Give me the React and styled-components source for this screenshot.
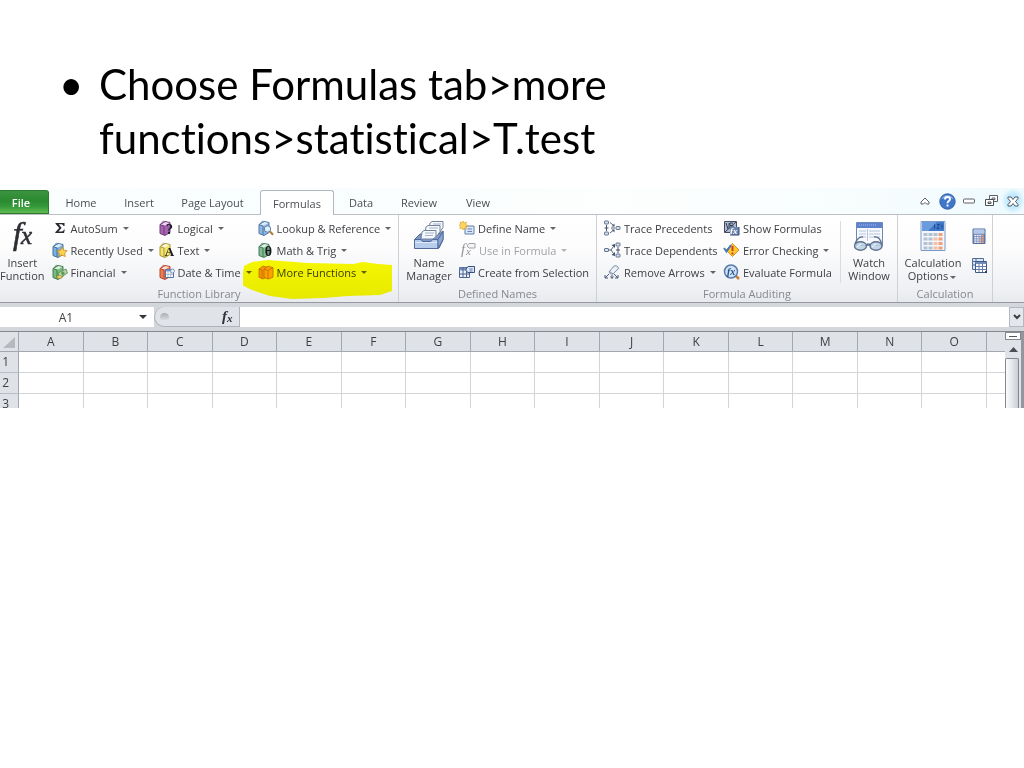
import React from "react";
import styled, { createGlobalStyle } from "styled-components";

const Global = createGlobalStyle`
  *, *::before, *::after { box-sizing: border-box; }
  body { margin: 0; background: #fff; }
  button, input { font: inherit; color: inherit; }
`;

const Slide = styled.main`
  min-height: 100vh;
  background: #fff;
  font-family: "Open Sans", "Noto Sans", sans-serif;
  font-size: 11px;
  color: #3f4044;
`;

const Bullets = styled.ul`
  margin: 0;
  padding: 57px 60px 23px 99px;
  list-style: none;
  font-family: Lato, "Open Sans", sans-serif;
  font-size: 42px;
  font-variant-ligatures: none;
  line-height: 54px;
  color: #000;
`;

const Bullet = styled.li`
  max-width: 640px;
  &::before {
    content: "•";
    float: left;
    margin-left: -40px;
  }
`;

const Excel = styled.section`
  overflow: hidden;
`;

const TabBar = styled.nav`
  display: flex;
  align-items: flex-end;
  height: 27px;
  border-bottom: 1px solid #bcc0c6;
  background: linear-gradient(90deg, #fbfefe, #f8fdfd 30%, #fdfefe 60%, #f7fdfd 85%, #eefaff);
`;

const Tab = styled.button`
  width: ${(p) => p.$w}px;
  height: 24px;
  padding: 0;
  border: 0;
  background: none;
  line-height: 23px;
  text-align: center;
  color: #4c4e52;
`;

const FileTab = styled(Tab)`
  padding-right: 6px;
  border: 1px solid #2b7a2f;
  border-left: 0;
  border-radius: 0 3px 0 0;
  background: linear-gradient(#3c9440, #2b8a30 45%, #35993a 70%, #5fbd50);
  color: #fff;
  font-weight: 600;
`;

const ActiveTab = styled(Tab)`
  height: 25px;
  margin-bottom: -1px;
  border: 1px solid #b4b8be;
  border-bottom: 0;
  border-radius: 3px 3px 0 0;
  background: #fff;
`;

const WindowTools = styled.div`
  display: flex;
  align-items: center;
  height: 26px;
  margin-left: auto;
`;

const ToolButton = styled.button`
  display: grid;
  place-items: center;
  width: 22px;
  height: 24px;
  padding: 0;
  border: 0;
  background: ${(p) => (p.$glow ? "radial-gradient(#9fdcfa, #c9edfd 45%, transparent 75%)" : "none")};
`;

const Ribbon = styled.div`
  display: flex;
  height: 88px;
  border-bottom: 1px solid #96999f;
  background: linear-gradient(#fff, #fcfcfd 40%, #eef0f3 85%, #e8eaee);
`;

const Group = styled.section`
  display: flex;
  flex: 0 0 ${(p) => p.$w}px;
  flex-direction: column;
  padding-top: 2px;
  border-right: 1px solid #cdd0d5;
`;

const GroupBody = styled.div`
  display: flex;
  height: 69px;
`;

const GroupLabel = styled.h2`
  margin: 0;
  text-align: center;
  font-size: 11px;
  font-weight: 400;
  line-height: 15px;
  color: #85888e;
`;

const Column = styled.div`
  position: relative;
  display: flex;
  flex: 0 0 ${(p) => p.$w}px;
  flex-direction: column;
`;

const Inset = styled.div`
  padding-left: 7px;
`;

const Item = styled.button`
  display: flex;
  align-items: center;
  gap: 3px;
  height: 22px;
  padding: 0;
  border: 0;
  background: none;
  white-space: nowrap;
  color: ${(p) => (p.disabled ? "#a0a2a6" : "inherit")};
  svg { flex: none; }
`;

const BigItem = styled.button`
  display: flex;
  flex: 0 0 ${(p) => p.$w}px;
  flex-direction: column;
  align-items: center;
  padding: 3px 0 0;
  border: 0;
  background: none;
  line-height: 13px;
  white-space: nowrap;
  svg { flex: none; }
`;

const BigText = styled.span`
  display: flex;
  flex-direction: column;
  align-items: center;
  margin-top: 3px;
`;

const Caret = styled.span`
  display: inline-block;
  flex: none;
  margin: 0 2px;
  border: 3px solid transparent;
  border-top-color: currentColor;
  border-bottom: 0;
  vertical-align: middle;
  opacity: 0.8;
`;

const Divider = styled.div`
  flex: 0 0 1px;
  height: 62px;
  margin-top: 4px;
  background: #d9dbe0;
`;

const Marker = styled.svg`
  position: absolute;
  left: -15px;
  top: 43px;
  mix-blend-mode: multiply;
  pointer-events: none;
`;

const CalcColumn = styled.div`
  display: flex;
  flex: 0 0 22px;
  flex-direction: column;
  align-items: center;
  gap: 10px;
  padding-top: 10px;
`;

const FormulaBar = styled.div`
  display: flex;
  height: 29px;
  padding: 4px 0;
  border-bottom: 1px solid #85888d;
  background: #d3d6db;
`;

const NameBox = styled.div`
  display: flex;
  align-items: center;
  width: 154px;
  background: #fff;
`;

const CellInput = styled.input`
  flex: 1;
  min-width: 0;
  padding: 0;
  border: 0;
  outline: 0;
  background: none;
  text-align: center;
  font-size: 12px;
`;

const PlainButton = styled.button`
  display: grid;
  place-items: center;
  width: 22px;
  height: 19px;
  padding: 0;
  border: 0;
  background: none;
`;

const FxArea = styled.div`
  display: flex;
  align-items: center;
  justify-content: space-between;
  width: 86px;
  padding-left: 5px;
  border: 1px solid #b0b4ba;
  border-top: 0;
  border-radius: 12px 0 0 12px;
  background: #e0e4e9;
`;

const Knob = styled.span`
  width: 9px;
  height: 7px;
  border-radius: 5px 5px 3px 3px;
  background: linear-gradient(#a9adb2, #d9dce0);
`;

const FormulaInput = styled.input`
  flex: 1;
  min-width: 0;
  padding: 0 4px;
  border: 0;
  outline: 0;
  background: #fff;
`;

const Expand = styled(PlainButton)`
  width: 15px;
  height: 20px;
  border: 1px solid #b5b9bf;
  background: #e4e7eb;
`;

const Sheet = styled.div`
  display: flex;
  height: 76px;
  overflow: hidden;
`;

const Cells = styled.table`
  flex: 1;
  width: 0;
  height: 83px;
  border-collapse: separate;
  border-spacing: 0;
  table-layout: fixed;
  font-size: 12px;
  th {
    height: 21px;
    padding: 0;
    border-right: 1px solid #a3a8af;
    border-bottom: 1px solid #a3a8af;
    background: #dfe3e8;
    font-weight: 400;
    line-height: 20px;
  }
  th[scope="col"] { height: 20px; line-height: 19px; }
  th[scope="row"] { padding-right: 9px; border-bottom-color: #b9bdc3; text-align: right; }
  td { padding: 0; border-right: 1px solid #d2d4d8; border-bottom: 1px solid #d2d4d8; }
  td:last-child, th:last-child { border-right: 0; }
`;

const Corner = styled.td`
  && { border-color: #a3a8af; background: #dfe3e8; vertical-align: bottom; }
  svg { display: block; margin-left: 3px; margin-bottom: 3px; }
`;

const LastHead = styled.td`
  && { border-color: #a3a8af; background: #dfe3e8; }
`;

const ScrollBar = styled.div`
  display: flex;
  flex: 0 0 19px;
  flex-direction: column;
  border-right: 3px solid #93979d;
  background: #dfe3e8;
`;

const SplitHandle = styled.button`
  height: 8px;
  padding: 0 3px;
  border: 1px solid #85898f;
  background: #fff;
  &::before { content: ""; display: block; height: 1px; background: #55585d; }
`;

const ScrollUp = styled(PlainButton)`
  width: 16px;
  height: 18px;
`;

const Thumb = styled.div`
  flex: 1;
  width: 14px;
  border: 1px solid #85898f;
  border-bottom: 0;
  border-radius: 2px 2px 0 0;
  background: linear-gradient(90deg, #fbfbfc, #dfe3e8 60%, #c8cdd4);
`;

function Book({ fill, edge, children }) {
  return (
    <svg width="16" height="16" viewBox="0 0 16 16">
      <path d="M1 4.5 6 1.5l5 1v10l-5 3-5-2z" fill={fill} stroke={edge} />
      <path d="M1 4.5 5 6v9" fill="none" stroke={edge} />
      <path d="M2 4.4 6.3 2l4 1L6 5.4z" fill="#fff" opacity=".75" />
      <path d="M3 4V2.2Q5 .2 6 2" fill="none" stroke={edge} strokeWidth=".7" />
      {children}
    </svg>
  );
}

const Glyph = ({ children, size = 12 }) => (
  <text x="10.5" y="14" textAnchor="middle" fontFamily="Liberation Serif, serif" fontWeight="700" fontSize={size} fill="#17171d">
    {children}
  </text>
);

const Sigma = () => (
  <svg width="16" height="16" viewBox="0 0 16 16">
    <path d="M3.5 3h9v3h-1Q11 4.3 9.5 4.3H6.8L9.6 8l-3.2 3.5h3.5q1.5 0 2-2h.9L12 13H3.3v-.8L7.2 8 3.5 3.8z" fill="#2a2b30" />
  </svg>
);

const RecentBook = () => (
  <Book fill="#7fb1df" edge="#41719f">
    <path d="m10 5 1.6 3.2 3.6.5-2.6 2.4.6 3.5-3.2-1.7L6.8 14.6l.7-3.5L5 8.7l3.5-.5z" fill="#ffd447" stroke="#c9882a" strokeWidth=".8" />
  </Book>
);
const MoneyBook = () => (
  <Book fill="#79ba7e" edge="#437c4d">
    <path d="m6 9 8-4 1.500 4-8 5z" fill="#b6d89d" stroke="#528552" strokeWidth=".8" />
    <circle cx="10.800" cy="9.300" r="1.700" fill="#5d9c57" />
    <ellipse cx="7.500" cy="13" rx="2.700" ry="1.600" fill="#e8cf62" stroke="#9a8237" strokeWidth=".6" />
  </Book>
);
const DateBook = () => (
  <Book fill="#ef7b50" edge="#b5482f">
    <path d="M6.500 5.500h8v8h-8z" fill="#fff" stroke="#5272a4" />
    <path d="M6.500 5.500h8v2h-8z" fill="#6f91c8" />
    <path d="M9 8v5m2.800-5v5M7 10.400h7" stroke="#8ba0bf" strokeWidth=".7" />
    <circle cx="13.500" cy="7" r="2" fill="#e2edf9" stroke="#6681a7" strokeWidth=".7" />
  </Book>
);
const LookupBook = () => (
  <Book fill="#90b8e2" edge="#4c75a7">
    <circle cx="9.500" cy="9" r="3.200" fill="#dff0fb" stroke="#587da8" />
    <path d="m12 11.500 3 3.200" stroke="#b87932" strokeWidth="2" />
  </Book>
);
const MoreBook = () => (
  <svg width="16" height="16" viewBox="0 0 16 16">
    <path d="M1 5 5 2l4 1.300V13l-4 2-4-1.700z" fill="#f79a45" stroke="#c86a26" strokeWidth=".8" />
    <path d="m6 5.200 4-3 5 1.400v9.600L10.500 15 6 13.400z" fill="#ffa53c" stroke="#c86a26" strokeWidth=".8" />
    <path d="m6 5.200 4 1.200V15M10 6.400l5-2.800M1 5l3 1v8.500" fill="none" stroke="#c86a26" strokeWidth=".8" />
  </svg>
);

const BigFx = () => (
  <svg width="32" height="33" viewBox="0 0 32 33" fontFamily="Liberation Serif, serif" fontStyle="italic" fill="#2d2e33" stroke="#2d2e33" strokeWidth=".6">
    <text x="7" y="24" fontSize="32">f</text>
    <text x="15" y="24" fontSize="25">x</text>
  </svg>
);
const SmallFx = ({ tag }) => (
  <svg width="17" height="16" viewBox="0 0 17 16" fontFamily="Liberation Serif, serif" fontStyle="italic" fontWeight={tag ? 400 : 700} fill={tag ? "#909399" : "#303136"}>
    <text x="2" y="12" fontSize="15">f</text>
    <text x="7" y="13" fontSize="11">x</text>
    {tag && <path d="m8 4 2-2.500h6V6h-6z" fill="#f4f4f6" stroke="#a1a4aa" />}
  </svg>
);

const NameManagerIcon = () => (
  <svg width="32" height="33" viewBox="0 0 32 33">
    <path d="m2 19 5-5h19l4-3v9l-4 8H2z" fill="#7f99c8" stroke="#4b6491" />
    <g fill="#f6f9fd" stroke="#72829b">
      <path d="m16 10 1-7 2-1.500h11v6L27 12H16z" />
      <path d="m12 14 1-7 2-1.500h12v6L24 16H12z" />
      <path d="m8 19 1-7 2-1.500h12v6L20 19z" />
    </g>
    <path d="M20 4h8M16 8h9M12 13h9M12 15.500h8" stroke="#a3b2c8" />
    <path d="M1.500 19.500H8l1.500 2H18l1.500-2H25v9H1.500z" fill="#b7cdeb" stroke="#526c9a" />
    <path d="M2 22.500h22.500" stroke="#e1ebf8" />
    <path d="m25 19.500 5-8v8l-5 9z" fill="#8ca7d2" stroke="#526c9a" />
  </svg>
);
const DefineIcon = () => (
  <svg width="16" height="16" viewBox="0 0 16 16">
    <path d="m6 8 2-2h7v8H6z" fill="#dce8f7" stroke="#617fae" />
    <path d="M8.500 9h4.500M8.500 11.500h4.500" stroke="#6685b3" />
    <path d="m4 1 1 2.300L7.500 2 6.600 4.500 9 5.500 6.600 6.500l.9 2.400L5 7.800 4 10 3 7.800.8 8.800l.8-2.300L0 5.500l1.700-1L1 2l2 1z" fill="#ffd75c" stroke="#dda730" strokeWidth=".7" />
  </svg>
);
const CreateIcon = () => (
  <svg width="16" height="16" viewBox="0 0 16 16">
    <path d="M.5 3.500h10v10H.5z" fill="#edf2fa" stroke="#4d638e" />
    <path d="M.5 3.500h10v3H.5z" fill="#758db9" />
    <path d="M.5 10h10M4 3.500v10M7.500 3.500v10" stroke="#4d638e" />
    <path d="m7 5 2-2.500h6.500v6H9L7 6.800z" fill="#d9e5f5" stroke="#39517d" />
    <path d="M10.500 5h3m-3 2h3" stroke="#5f7aa7" />
  </svg>
);

const Node = ({ x, y }) => <rect x={x} y={y} width="4" height="3" rx=".5" fill="#d5dfed" stroke="#586b87" strokeWidth=".9" />;
const PrecedentIcon = () => (
  <svg width="17" height="16" viewBox="0 0 17 16">
    <Node x=".5" y="1" /><Node x=".5" y="12" /><Node x="12" y="6.500" />
    <path d="M2.500 5v6M.5 8h4" fill="none" stroke="#43536e" />
    <path d="m6 2.500 3 2.500M6 13l3-2.500M7 8h4" stroke="#43536e" strokeWidth=".9" />
    <path d="M10.500 3.500v3h-3zM10.500 12.500v-3h-3z" fill="#43536e" />
  </svg>
);
const DependentIcon = () => (
  <svg width="17" height="16" viewBox="0 0 17 16">
    <Node x=".5" y="6.500" /><Node x="12" y="1" /><Node x="12" y="12" />
    <path d="M14 5v6M12 8h4" fill="none" stroke="#43536e" />
    <path d="M5 8h2l2.500-3.500M7 8l2.500 3.500" fill="none" stroke="#43536e" strokeWidth=".9" />
    <path d="M11 2v4L7.500 3zM11 14v-4l-3.500 3z" fill="#43536e" />
  </svg>
);
const RemoveIcon = () => (
  <svg width="17" height="16" viewBox="0 0 17 16">
    <path d="m5 8 5-6q2-1 4 1 1 1 0 2L9 10q-3 1-4-2z" fill="#edf1f7" stroke="#7f90a9" />
    <path d="m5 7 4 3" stroke="#7f90a9" />
    <path d="m5 10-4 4m0-3v3h3M8 11v3M6.500 12.500 8 14.500l1.500-2M10 10l4 4m-3 0h3v-3" fill="none" stroke="#465773" />
  </svg>
);
const ShowIcon = () => (
  <svg width="17" height="16" viewBox="0 0 17 16">
    <path d="M1.500 1.500h12v11h-12z" fill="#aebbd0" stroke="#414c61" />
    <path d="m3 3 2 6M6 3v5M7 3h3M7 3v2.500h3V9H7M2 12 13 2" fill="none" stroke="#313b4d" />
    <path d="M7 7h9v8H7z" fill="#6f86ae" />
    <text x="7" y="14" fontFamily="Liberation Serif, serif" fontStyle="italic" fontWeight="700" fontSize="9" fill="#fff">fx</text>
    <path d="M16 7v8H7" fill="none" stroke="#344b77" />
  </svg>
);
const ErrorIcon = () => (
  <svg width="17" height="16" viewBox="0 0 17 16">
    <path d="M9.500 1.500 16 8l-6.500 6.500L3 8z" fill="#ffc62e" stroke="#d3912c" />
    <path d="M9.500 4v5M9.500 10.500v2" stroke="#c13a22" strokeWidth="1.800" />
    <path d="m1 6 2.500 3.500L8 3" fill="none" stroke="#4977bd" strokeWidth="2" />
  </svg>
);
const EvaluateIcon = () => (
  <svg width="17" height="16" viewBox="0 0 17 16">
    <path d="m12 11 4 4" stroke="#cf823a" strokeWidth="2.500" />
    <circle cx="8" cy="7.500" r="6.500" fill="#cfe2f7" stroke="#577baa" strokeWidth="1.500" />
    <text x="4" y="11" fontFamily="Liberation Serif, serif" fontStyle="italic" fontWeight="700" fontSize="10" fill="#284f8a">fx</text>
  </svg>
);
const WatchIcon = () => (
  <svg width="32" height="33" viewBox="0 0 32 33">
    <path d="M3.500 2.500h26v23h-26z" fill="#f7f9fd" stroke="#6b88bb" />
    <path d="M4 3h25v5H4z" fill="#5f82ce" />
    <path d="M6 5h17" stroke="#a3baf0" strokeDasharray="1 1" />
    <path d="M6 11h7M6 14h7M6 17h7M16 11h11M16 14h11M16 17h11M14.500 9v12" stroke="#b6c5dd" />
    <g fill="#bad0e4" fillOpacity=".85" stroke="#60738c" strokeWidth="1.400">
      <ellipse cx="7.500" cy="26" rx="6" ry="4.200" /><ellipse cx="23" cy="26" rx="6" ry="4.200" />
      <path d="M13.500 25q2-2 3.500 0M2 24q3-8 8-7M28.500 24Q27 16 21 17" fill="none" />
    </g>
    <path d="m4 27 4-3m11 3 4-3" stroke="#fff" />
  </svg>
);
const CalculatorIcon = ({ small }) => (
  <svg width={small ? 14 : 28} height={small ? 17 : 33} viewBox="0 0 28 33">
    <path d="M2 1.500h24v29H2z" fill={small ? "#6f84b5" : "#f3f6fa"} stroke={small ? "#556b9c" : "#7d9ac6"} strokeWidth={small ? 2 : 1} />
    <path d="M3 2h22v9H3z" fill={small ? "#b4c9e9" : "#3f78c8"} />
    {!small && <path d="M3 2h15L9 11H3z" fill="#6a9bdc" />}
    {[0, 1, 2, 3].map((r) => [0, 1, 2, 3].map((c) => (
      <rect key={`${r}${c}`} x={4.5 + c * 5} y={13 + r * 4.5} width="4" height="3" fill={c === 3 ? "#f0a07c" : c === 2 && r > 0 ? "#f6c0a6" : small ? "#e2e9f5" : "#b4c1d4"} />
    )))}
    {!small && <path d="M15.500 4.500v4M18 4.500h2.500L18 8.500h2.500M23 4.500v4" fill="none" stroke="#1d4a90" />}
  </svg>
);
const CalcSheetIcon = () => (
  <svg width="17" height="17" viewBox="0 0 17 17">
    <path d="M1.500 1.500h11v11h-11z" fill="#dce6f4" stroke="#526c98" />
    <path d="M1.500 4.500h11M1.500 8h4M5 1.500v11" stroke="#526c98" />
    <path d="M4.500 4.500h11v9l-2 2h-9z" fill="#fff" stroke="#405a87" />
    <path d="M4.500 5h11v2h-11z" fill="#728db9" />
    <path d="M5 9.500h10M5 12.500h10M8 7v8M11.500 7v8" stroke="#6580ab" />
    <path d="m13 16 3-3v3z" fill="#263d69" />
  </svg>
);

const tabsBefore = [["Home", 64], ["Insert", 52], ["Page Layout", 95]];
const tabsAfter = [["Data", 54], ["Review", 62], ["View", 56]];
const letters = "ABCDEFGHIJKLMNO".split("");

function Command({ icon, label, menu, disabled }) {
  return (
    <Item type="button" disabled={disabled}>
      {icon}
      <span>{label}</span>
      {menu && <Caret />}
    </Item>
  );
}

function BigCommand({ icon, lines, width, menu }) {
  return (
    <BigItem type="button" $w={width}>
      {icon}
      <BigText>
        <span>{lines[0]}</span>
        <span>{lines[1]}{menu && <Caret />}</span>
      </BigText>
    </BigItem>
  );
}

function WindowControls() {
  return (
    <WindowTools>
      <ToolButton type="button" aria-label="Minimize ribbon">
        <svg width="10" height="8" viewBox="0 0 10 8"><path d="M1 5 5 1l4 4v2H6.500L5 5.500 3.500 7H1z" fill="#fff" stroke="#5c6067" /></svg>
      </ToolButton>
      <ToolButton type="button" aria-label="Help">
        <svg width="17" height="17" viewBox="0 0 17 17">
          <circle cx="8.500" cy="8.500" r="7.700" fill="#3f76c9" stroke="#3562a7" />
          <path d="M2.500 6a6.500 6 0 0 1 12 0q-6-2-12 0z" fill="#83ace4" />
          <path d="M6 6.500Q6 4 8.500 4T11 6.300Q11 7.500 9.500 8.300 8.500 9 8.500 10.300M8.500 11.500v2" fill="none" stroke="#fff" strokeWidth="1.900" />
        </svg>
      </ToolButton>
      <ToolButton type="button" aria-label="Minimize">
        <svg width="12" height="6" viewBox="0 0 12 6"><rect x=".5" y="1" width="11" height="4" rx="1" fill="#fff" stroke="#5c6067" /></svg>
      </ToolButton>
      <ToolButton type="button" aria-label="Restore">
        <svg width="13" height="12" viewBox="0 0 13 12"><path d="M4.500.5h8v6h-8zM7 3h3v1.500H7z" fill="#fff" stroke="#5c6067" /><path d="M.5 4.500h8v6h-8zM3 7h3v1.500H3z" fill="#fff" stroke="#4c5057" /></svg>
      </ToolButton>
      <ToolButton type="button" aria-label="Close" $glow>
        <svg width="12" height="11" viewBox="0 0 12 11"><path d="M1 1h3l2 2.500L8 1h3v1.500L8.500 5.500 11 8.500V10H8L6 7.500 4 10H1V8.500l2.500-3L1 2.500z" fill="#fff" stroke="#505967" /></svg>
      </ToolButton>
    </WindowTools>
  );
}

function FunctionLibrary() {
  return (
    <Group $w={399}>
      <GroupBody>
        <BigCommand width={44} icon={<BigFx />} lines={["Insert", "Function"]} />
        <Column $w={114}>
          <Inset>
            <Command icon={<Sigma />} label="AutoSum" menu />
            <Command icon={<RecentBook />} label="Recently Used" menu />
            <Command icon={<MoneyBook />} label="Financial" menu />
          </Inset>
        </Column>
        <Column $w={99}>
          <Command icon={<Book fill="#a763b1" edge="#704079"><Glyph size={14}>?</Glyph></Book>} label="Logical" menu />
          <Command icon={<Book fill="#f5e36b" edge="#a59638"><Glyph size={13}>A</Glyph></Book>} label="Text" menu />
          <Command icon={<DateBook />} label="Date & Time" menu />
        </Column>
        <Column $w={140}>
          <Command icon={<LookupBook />} label="Lookup & Reference" menu />
          <Command icon={<Book fill="#83bb94" edge="#437b55"><Glyph size={14}>θ</Glyph></Book>} label="Math & Trig" menu />
          <Command icon={<MoreBook />} label="More Functions" menu />
          <Marker width="150" height="40" viewBox="0 0 150 40">
            <path d="M1 6 9 2l16-2 40 3 45 1 10-2 15 2 14 1v26l-12 4-32 1-25 2-31 1-22-3-18-6-8-4-3-2z" fill="#fcfc00" />
          </Marker>
        </Column>
      </GroupBody>
      <GroupLabel>Function Library</GroupLabel>
    </Group>
  );
}

export default function App() {
  return (
    <Slide>
      <Global />
      <Bullets>
        <Bullet>Choose Formulas tab&gt;more functions&gt;statistical&gt;T.test</Bullet>
      </Bullets>
      <Excel>
        <TabBar>
          <FileTab type="button" $w={49}>File</FileTab>
          {tabsBefore.map(([t, w]) => <Tab type="button" key={t} $w={w}>{t}</Tab>)}
          <ActiveTab type="button" $w={74}>Formulas</ActiveTab>
          {tabsAfter.map(([t, w]) => <Tab type="button" key={t} $w={w}>{t}</Tab>)}
          <WindowControls />
        </TabBar>
        <Ribbon>
          <FunctionLibrary />
          <Group $w={198}>
            <GroupBody>
              <BigCommand width={60} icon={<NameManagerIcon />} lines={["Name", "Manager"]} />
              <Column $w={136}>
                <Command icon={<DefineIcon />} label="Define Name" menu />
                <Command icon={<SmallFx tag />} label="Use in Formula" menu disabled />
                <Command icon={<CreateIcon />} label="Create from Selection" />
              </Column>
            </GroupBody>
            <GroupLabel>Defined Names</GroupLabel>
          </Group>
          <Group $w={301}>
            <GroupBody>
              <Column $w={126}>
                <Inset>
                  <Command icon={<PrecedentIcon />} label="Trace Precedents" />
                  <Command icon={<DependentIcon />} label="Trace Dependents" />
                  <Command icon={<RemoveIcon />} label="Remove Arrows" menu />
                </Inset>
              </Column>
              <Column $w={117}>
                <Command icon={<ShowIcon />} label="Show Formulas" />
                <Command icon={<ErrorIcon />} label="Error Checking" menu />
                <Command icon={<EvaluateIcon />} label="Evaluate Formula" />
              </Column>
              <Divider />
              <BigCommand width={56} icon={<WatchIcon />} lines={["Watch", "Window"]} />
            </GroupBody>
            <GroupLabel>Formula Auditing</GroupLabel>
          </Group>
          <Group $w={95}>
            <GroupBody>
              <BigCommand width={70} icon={<CalculatorIcon />} lines={["Calculation", "Options"]} menu />
              <CalcColumn>
                <PlainButton type="button" aria-label="Calculate now"><CalculatorIcon small /></PlainButton>
                <PlainButton type="button" aria-label="Calculate sheet"><CalcSheetIcon /></PlainButton>
              </CalcColumn>
            </GroupBody>
            <GroupLabel>Calculation</GroupLabel>
          </Group>
        </Ribbon>
        <FormulaBar>
          <NameBox>
            <CellInput aria-label="Name box" defaultValue="A1" />
            <PlainButton type="button" aria-label="Names">
              <svg width="8" height="4" viewBox="0 0 8 4"><path d="M0 0h8L4 4z" fill="#36383c" /></svg>
            </PlainButton>
          </NameBox>
          <FxArea>
            <Knob />
            <PlainButton type="button" aria-label="Insert function"><SmallFx /></PlainButton>
          </FxArea>
          <FormulaInput aria-label="Formula" />
          <Expand type="button" aria-label="Expand formula bar">
            <svg width="8" height="6" viewBox="0 0 8 6"><path d="m1 1 3 3 3-3" fill="none" stroke="#3c3f44" strokeWidth="2" /></svg>
          </Expand>
        </FormulaBar>
        <Sheet>
          <Cells>
            <colgroup>
              <col width="19" />
              {letters.map((l) => <col key={l} />)}
              <col width="18" />
            </colgroup>
            <thead>
              <tr>
                <Corner><svg width="12" height="11" viewBox="0 0 12 11"><path d="M12 0v11H0z" fill="#b6babf" /></svg></Corner>
                {letters.map((l) => <th scope="col" key={l}>{l}</th>)}
                <LastHead />
              </tr>
            </thead>
            <tbody>
              {[1, 2, 3].map((n) => (
                <tr key={n}>
                  <th scope="row">{n}</th>
                  {letters.map((l) => <td key={l} />)}
                  <td />
                </tr>
              ))}
            </tbody>
          </Cells>
          <ScrollBar>
            <SplitHandle type="button" aria-label="Split" />
            <ScrollUp type="button" aria-label="Scroll up">
              <svg width="9" height="5" viewBox="0 0 9 5"><path d="M0 5h9L4.500 0z" fill="#4a4d52" /></svg>
            </ScrollUp>
            <Thumb />
          </ScrollBar>
        </Sheet>
      </Excel>
    </Slide>
  );
}
